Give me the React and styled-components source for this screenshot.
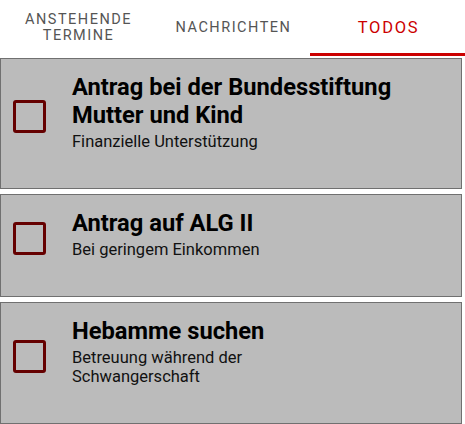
import React from 'react'
import styled, { createGlobalStyle } from 'styled-components'

const GlobalStyle = createGlobalStyle`
  html, body {
    margin: 0;
    padding: 0;
    background: #ffffff;
  }
  body {
    font-family: Roboto, 'Noto Sans', sans-serif;
  }
  * {
    box-sizing: border-box;
  }
`

const Screen = styled.div`
  width: 465px;
  height: 424px;
  overflow: hidden;
  background: #fff;
`

const TabBar = styled.div`
  display: grid;
  grid-template-columns: repeat(3, 1fr);
  height: 56px;
  margin-bottom: 2px;
`

const Tab = styled.div`
  display: flex;
  align-items: center;
  justify-content: center;
  text-align: center;
  padding: 3px 10px 0 12px;
  font-size: ${props => (props.active ? '16.5px' : '14.5px')};
  font-weight: 400;
  line-height: 16.5px;
  letter-spacing: ${props => (props.active ? '1.7px' : '1.5px')};
  text-transform: uppercase;
  color: ${props => (props.active ? '#cc0000' : '#555555')};
  border-bottom: 3px solid ${props => (props.active ? '#cc0000' : 'transparent')};
`

const List = styled.div`
  display: flex;
  flex-direction: column;
  gap: 5px;
  width: 462px;
`

const Card = styled.div`
  display: flex;
  align-items: center;
  gap: 26px;
  padding: 14px 12px 28px 12px;
  background: #bbbbbb;
  border: 1px solid #707070;
`

const Checkbox = styled.div`
  flex: none;
  width: 33px;
  height: 33px;
  border: 3px solid #650000;
  border-radius: 3px;
`

const Texts = styled.div`
  display: flex;
  flex-direction: column;
  padding-bottom: 9px;
`

const Title = styled.div`
  font-size: 23.7px;
  font-weight: 700;
  line-height: 28px;
  color: #000;
`

const Subtitle = styled.div`
  margin-top: 3px;
  font-size: 16.5px;
  line-height: 19px;
  color: #111;
  max-width: ${props => (props.narrow ? '200px' : 'none')};
`

const todos = [
  { title: ['Antrag bei der Bundesstiftung', 'Mutter und Kind'], sub: 'Finanzielle Unterstützung' },
  { title: ['Antrag auf ALG II'], sub: 'Bei geringem Einkommen' },
  { title: ['Hebamme suchen'], sub: 'Betreuung während der Schwangerschaft', narrow: true },
]

export default function App() {
  return (
    <>
      <GlobalStyle />
      <Screen>
        <TabBar>
          <Tab>
            Anstehende
            <br />
            Termine
          </Tab>
          <Tab>Nachrichten</Tab>
          <Tab active>Todos</Tab>
        </TabBar>
        <List>
          {todos.map(t => (
            <Card key={t.sub}>
              <Checkbox />
              <Texts>
                <Title>
                  {t.title.map((line, i) => (
                    <div key={i}>{line}</div>
                  ))}
                </Title>
                <Subtitle narrow={t.narrow}>{t.sub}</Subtitle>
              </Texts>
            </Card>
          ))}
        </List>
      </Screen>
    </>
  )
}
